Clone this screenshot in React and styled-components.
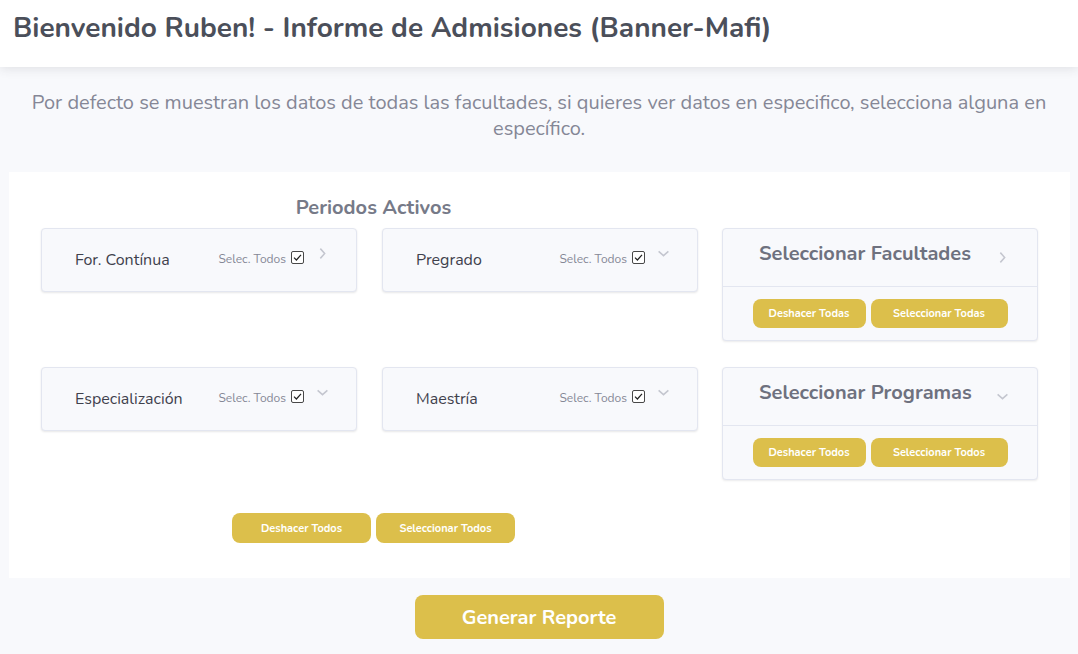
import styled, { createGlobalStyle } from 'styled-components';

const GlobalStyle = createGlobalStyle`
  body {
    margin: 0;
    background: #f8f9fc;
    font-family: "Nunito", "Lato", "Noto Sans", sans-serif;
  }
`;

const gold = '#dcbf4b';

const Chevron = ({ open }) => (
    <ChevronIcon viewBox="0 0 12 12">
        {open ? (
            <polyline points="1.5,4 6,8 10.5,4" fill="none" stroke="#c4c6cf" strokeWidth="1.4" />
        ) : (
            <polyline points="4,1.5 8,6 4,10.5" fill="none" stroke="#c4c6cf" strokeWidth="1.4" />
        )}
    </ChevronIcon>
);

const CheckBox = () => (
    <CheckIcon viewBox="0 0 13 13">
        <rect x="0.5" y="0.5" width="12" height="12" rx="1.5" fill="#fff" stroke="#333" strokeWidth="0.9" />
        <polyline points="3,6.6 5.4,9 10,3.8" fill="none" stroke="#222" strokeWidth="1.2" />
    </CheckIcon>
);

function PeriodCard({ name, open }) {
    return (
        <Card>
            <CardName>{name}</CardName>
            <SelectAll>
                Selec. Todos <CheckBox />
            </SelectAll>
            <ChevronWrap>
                <Chevron open={open} />
            </ChevronWrap>
        </Card>
    );
}

function SelectorCard({ title, open, undo, pick }) {
    return (
        <SideCard>
            <SideHead>
                <SideTitle>{title}</SideTitle>
                <Chevron open={open} />
            </SideHead>
            <SideBody>
                <GoldButton w={113}>{undo}</GoldButton>
                <GoldButton w={137}>{pick}</GoldButton>
            </SideBody>
        </SideCard>
    );
}

export default function App() {
    return (
        <>
            <GlobalStyle />
            <Header>
                <Title>Bienvenido Ruben! - Informe de Admisiones (Banner-Mafi)</Title>
            </Header>
            <Intro>
                Por defecto se muestran los datos de todas las facultades, si quieres ver datos en especifico, selecciona alguna en específico.
            </Intro>
            <Panel>
                <Periods>
                    <SectionTitle>Periodos Activos</SectionTitle>
                    <PeriodGrid>
                        <PeriodCard name="For. Contínua" />
                        <PeriodCard name="Pregrado" open />
                        <PeriodCard name="Especialización" open />
                        <PeriodCard name="Maestría" open />
                    </PeriodGrid>
                    <ButtonRow>
                        <GoldButton w={139} h={30}>Deshacer Todos</GoldButton>
                        <GoldButton w={139} h={30}>Seleccionar Todos</GoldButton>
                    </ButtonRow>
                </Periods>
                <Sidebar>
                    <SelectorCard title="Seleccionar Facultades" undo="Deshacer Todas" pick="Seleccionar Todas" />
                    <SelectorCard title="Seleccionar Programas" open undo="Deshacer Todos" pick="Seleccionar Todos" />
                </Sidebar>
            </Panel>
            <Footer>
                <ReportButton>Generar Reporte</ReportButton>
            </Footer>
        </>
    );
}

const Header = styled.header`
  height: 67px;
  box-sizing: border-box;
  padding: 10px 13px 0;
  background: #fff;
  box-shadow: 0 2px 10px rgba(58, 59, 69, 0.12);
`;

const Title = styled.h1`
  margin: 0;
  font-size: 28px;
  line-height: 36px;
  font-weight: 700;
  color: #4b4f5a;
`;

const Intro = styled.p`
  margin: 23px 20px 30px;
  text-align: center;
  font-size: 20px;
  line-height: 26px;
  font-weight: 400;
  color: #858796;
`;

const Panel = styled.section`
  margin: 0 8px 0 9px;
  padding: 24px 32px 35px 32px;
  background: #fff;
  display: grid;
  grid-template-columns: 656px 316px;
  column-gap: 25px;
`;

const Periods = styled.div`
  display: flex;
  flex-direction: column;
`;

const SectionTitle = styled.h2`
  margin: 0 0 8px;
  padding-left: 9px;
  text-align: center;
  font-size: 20px;
  line-height: 24px;
  font-weight: 700;
  color: #767a88;
`;

const PeriodGrid = styled.div`
  display: grid;
  grid-template-columns: 316px 316px;
  column-gap: 25px;
  row-gap: 75px;
`;

const Card = styled.div`
  position: relative;
  height: 64px;
  box-sizing: border-box;
  display: flex;
  align-items: center;
  padding: 0 52px 0 33px;
  background: #f8f9fc;
  border: 1px solid #e3e6f0;
  border-radius: 4px;
  box-shadow: 0 1px 2px rgba(58, 59, 69, 0.12);
`;

const CardName = styled.span`
  flex: 1;
  font-size: 16px;
  color: #3f414c;
`;

const SelectAll = styled.span`
  display: flex;
  align-items: center;
  gap: 5px;
  margin-top: -3px;
  font-size: 12px;
  color: #858796;
`;

const CheckIcon = styled.svg`
  width: 13px;
  height: 13px;
  margin-top: -2px;
`;

const ChevronWrap = styled.span`
  position: absolute;
  right: 27px;
  top: 18px;
`;

const ChevronIcon = styled.svg`
  width: 13px;
  height: 13px;
  display: block;
`;

const ButtonRow = styled.div`
  display: flex;
  justify-content: center;
  gap: 5px;
  margin-top: 82px;
  padding-left: 9px;
`;

const GoldButton = styled.button`
  width: ${(p) => p.w}px;
  height: ${(p) => p.h || 29}px;
  padding: 0;
  border: none;
  border-radius: 8px;
  background: ${gold};
  color: #fff;
  font-family: inherit;
  font-size: 11px;
  font-weight: 700;
`;

const Sidebar = styled.div`
  margin-top: 32px;
  display: flex;
  flex-direction: column;
  gap: 26px;
`;

const SideCard = styled.div`
  background: #f8f9fc;
  border: 1px solid #e3e6f0;
  border-radius: 4px;
  box-shadow: 0 1px 2px rgba(58, 59, 69, 0.1);
`;

const SideHead = styled.div`
  height: 57px;
  display: flex;
  align-items: center;
  justify-content: space-between;
  padding: 0 28px 0 36px;
  border-bottom: 1px solid #e3e6f0;
`;

const SideTitle = styled.span`
  font-size: 20px;
  font-weight: 700;
  color: #6e717f;
  margin-top: -9px;
`;

const SideBody = styled.div`
  display: flex;
  justify-content: center;
  gap: 5px;
  padding: 12px 0 12px;
`;

const Footer = styled.div`
  display: flex;
  justify-content: center;
  padding: 17px 0 15px;
`;

const ReportButton = styled.button`
  width: 249px;
  height: 44px;
  border: none;
  border-radius: 8px;
  background: ${gold};
  color: #fff;
  font-family: inherit;
  font-size: 20px;
  font-weight: 700;
`;
